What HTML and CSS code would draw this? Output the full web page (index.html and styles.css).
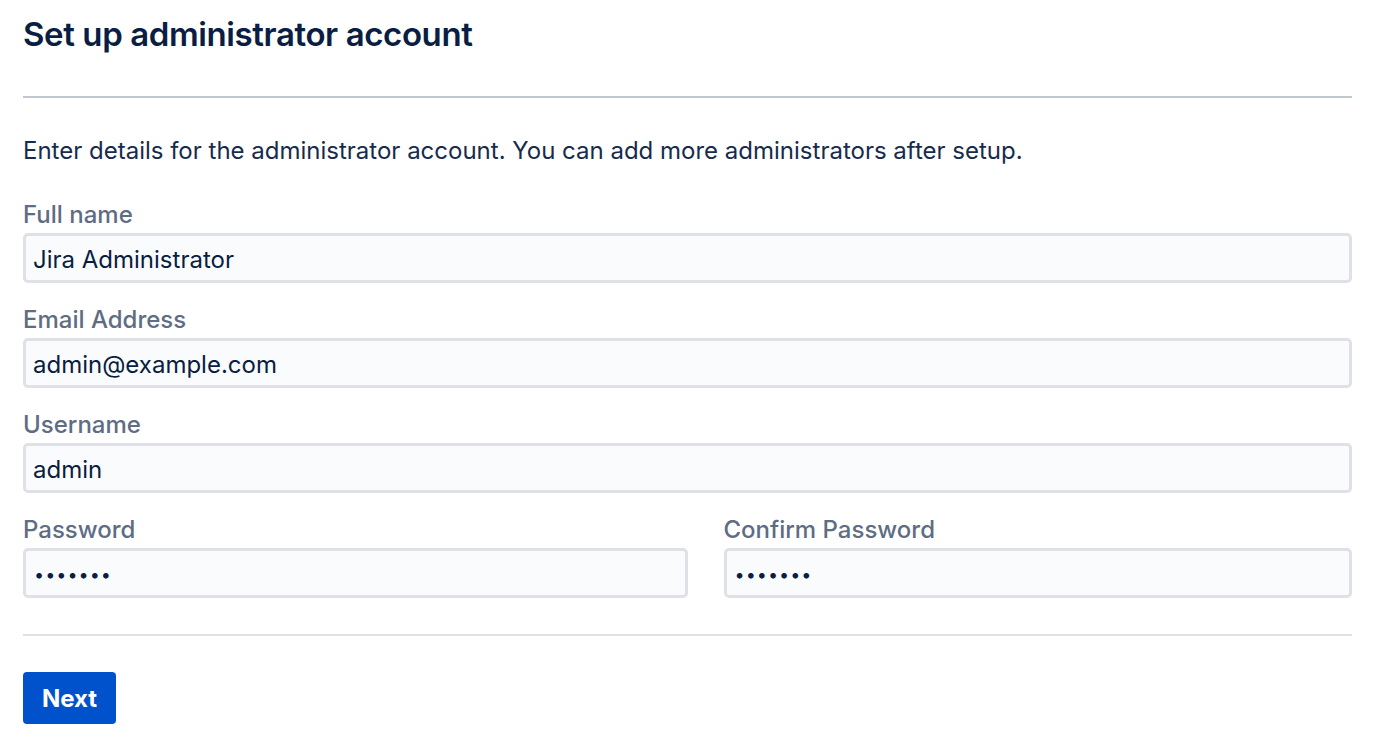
FILE: index.html
```html
<!DOCTYPE html>
<html>
<head>
<meta charset="utf-8">
<link rel="stylesheet" href="styles.css">
</head>
<body>
<div class="page">
  <h1 class="title">Set up administrator account</h1>
  <hr class="rule-top">
  <p class="intro">Enter details for the administrator account. You can add more administrators after setup.</p>
  <form class="form">
    <div class="field">
      <label class="label">Full name</label>
      <div class="input">Jira Administrator</div>
    </div>
    <div class="field">
      <label class="label">Email Address</label>
      <div class="input">admin@example.com</div>
    </div>
    <div class="field">
      <label class="label">Username</label>
      <div class="input">admin</div>
    </div>
    <div class="row">
      <div class="field">
        <label class="label">Password</label>
        <div class="input dots">•••••••</div>
      </div>
      <div class="field field-right">
        <label class="label">Confirm Password</label>
        <div class="input dots">•••••••</div>
      </div>
    </div>
  </form>
  <hr class="rule-bottom">
  <button class="btn" type="button">Next</button>
</div>
</body>
</html>
```
FILE: styles.css
```css
html, body { margin: 0; padding: 0; background: #fff; }
body { font-family: Inter, "Liberation Sans", sans-serif; color: #172b4d; }
.page { padding: 0 26px 0 23px; display: flex; flex-direction: column; align-items: stretch; }
.title { margin: 14px 0 0; font-size: 33px; font-weight: 600; color: #091e42; line-height: 40px; letter-spacing: -0.4px; }
.rule-top { margin: 42px 0 0; border: 0; height: 2px; background: #c1c7d0; }
.intro { margin: 39px 0 0; font-size: 24px; line-height: 28px; color: #172b4d; }
.form { display: flex; flex-direction: column; gap: 23px; margin-top: 36px; }
.field { display: flex; flex-direction: column; gap: 4px; min-width: 0; }
.field-right { padding-left: 36px; }
.label { font-size: 24px; line-height: 28px; color: #5e6c84; font-weight: 500; }
.input { height: 41px; border: 3px solid #dfe1e6; border-radius: 5px; background: #fafbfc; padding: 3px 7px 0; font-size: 24px; line-height: 41px; color: #091e42; }
.dots { letter-spacing: 1px; font-size: 18px; padding-left: 8px; }
.row { display: grid; grid-template-columns: 1fr 1fr; }
.rule-bottom { margin: 36px 0 0; border: 0; height: 2px; background: #dfe1e6; }
.btn { align-self: flex-start; margin-top: 36px; width: 93px; height: 52px; background: #0052cc; color: #fff; border: 0; border-radius: 4px; font-family: inherit; font-size: 24px; font-weight: 700; padding: 0; }
```
